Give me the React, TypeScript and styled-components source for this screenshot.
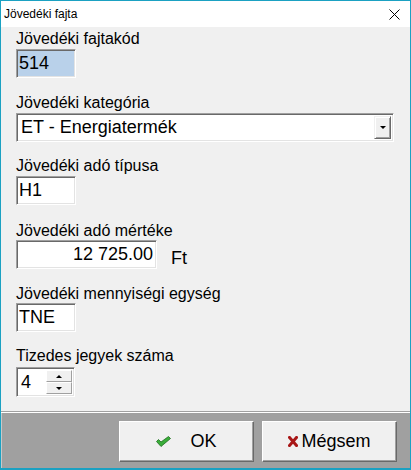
import styled, { createGlobalStyle } from "styled-components";

const GlobalStyle = createGlobalStyle`
  html, body {
    margin: 0;
    padding: 0;
    background: #ffffff;
  }
  body {
    font-family: "Liberation Sans", Arial, sans-serif;
    color: #000;
  }
`;

const Window = styled.div`
  width: 411px;
  height: 470px;
  box-sizing: border-box;
  border: 1px solid #1ba1c2;
  border-bottom-width: 2px;
  display: flex;
  flex-direction: column;
  background: #f0f0f0;
`;

const TitleBar = styled.div`
  height: 26px;
  flex-shrink: 0;
  background: #ffffff;
  display: flex;
  align-items: center;
  justify-content: space-between;
  padding: 0 10px 0 3px;
  font-size: 12px;
`;

const Body = styled.div`
  flex: 1;
  display: flex;
  flex-direction: column;
  padding: 0 16px 0 15px;
`;

const Field = styled.div<{ $top: number }>`
  display: flex;
  flex-direction: column;
  align-items: flex-start;
  margin-top: ${({ $top }) => $top}px;
`;

const Label = styled.label<{ $gap: number }>`
  font-size: 16px;
  line-height: 18px;
  margin-bottom: ${({ $gap }) => $gap}px;
  white-space: nowrap;
`;

const sunken = `
  box-sizing: border-box;
  border: 1px solid;
  border-color: #a0a0a0 #ffffff #ffffff #a0a0a0;
  box-shadow: inset 1px 1px 0 #696969, inset -1px -1px 0 #e3e3e3;
`;

const TextBox = styled.input<{ $width: number; $align?: "left" | "right"; $bg?: string }>`
  ${sunken}
  width: ${({ $width }) => $width}px;
  height: 29px;
  margin: 0;
  padding: 0 ${({ $align }) => ($align === "right" ? "3px" : "0")} 0
    ${({ $align }) => ($align === "right" ? "0" : "2px")};
  font-family: "Liberation Sans", Arial, sans-serif;
  font-size: 18px;
  color: #000;
  text-align: ${({ $align }) => $align ?? "left"};
  background: ${({ $bg }) => $bg ?? "#ffffff"};
  outline: none;
`;

const Combo = styled.div`
  ${sunken}
  width: 100%;
  height: 29px;
  background: #ffffff;
  display: flex;
  align-items: stretch;
  padding: 2px;
`;

const ComboText = styled.div`
  flex: 1;
  display: flex;
  align-items: center;
  padding-left: 2px;
  font-size: 18px;
`;

const DropButton = styled.div`
  width: 17px;
  box-sizing: border-box;
  background: #f0f0f0;
  border: 1px solid;
  border-color: #f0f0f0 #696969 #696969 #f0f0f0;
  box-shadow: inset 1px 1px 0 #ffffff, inset -1px -1px 0 #a0a0a0;
  display: flex;
  align-items: center;
  justify-content: center;
`;

const Arrow = styled.span<{ $up?: boolean }>`
  width: 0;
  height: 0;
  border-left: 3px solid transparent;
  border-right: 3px solid transparent;
  ${({ $up }) =>
    $up ? "border-bottom: 3px solid #000;" : "border-top: 3px solid #000;"}
`;

const InlineRow = styled.div`
  display: flex;
  align-items: flex-end;
`;

const Unit = styled.span`
  font-size: 18px;
  line-height: 18px;
  margin-left: 14px;
  margin-bottom: 2px;
`;

const Spinner = styled.div`
  ${sunken}
  width: 59px;
  height: 30px;
  background: #ffffff;
  display: flex;
  padding: 2px;
`;

const SpinText = styled.div`
  flex: 1;
  display: flex;
  align-items: center;
  padding-left: 2px;
  font-size: 18px;
`;

const SpinButtons = styled.div`
  width: 26px;
  display: flex;
  flex-direction: column;
`;

const SpinButton = styled.div`
  flex: 1;
  box-sizing: border-box;
  background: #f0f0f0;
  border: 1px solid;
  border-color: #ffffff #a0a0a0 #a0a0a0 #ffffff;
  display: flex;
  align-items: center;
  justify-content: center;
`;

const Separator = styled.div`
  height: 0;
  border-top: 1px solid #a0a0a0;
  border-bottom: 1px solid #ffffff;
`;

const Footer = styled.div`
  height: 55px;
  flex-shrink: 0;
  box-sizing: border-box;
  background: #a0a0a0;
  border-left: 1px solid #c8c8c8;
  display: flex;
  justify-content: flex-end;
  align-items: flex-start;
  gap: 8px;
  padding: 8px 13px 0 0;
`;

const Button = styled.button<{ $gap: number }>`
  width: 135px;
  height: 41px;
  box-sizing: border-box;
  background: #f0f0f0;
  border: 1px solid;
  border-color: #ffffff #696969 #696969 #ffffff;
  box-shadow: inset -1px -1px 0 #a0a0a0;
  display: flex;
  align-items: center;
  justify-content: center;
  gap: ${({ $gap }) => $gap}px;
  font-family: "Liberation Sans", Arial, sans-serif;
  font-size: 18px;
  color: #000;
  padding: 0;
`;

const CloseIcon = () => (
  <svg width="11" height="11" viewBox="0 0 11 11">
    <path d="M0.5 0.5 L10.5 10.5 M10.5 0.5 L0.5 10.5" stroke="#000" strokeWidth="1" />
  </svg>
);

const CheckIcon = () => (
  <svg width="15" height="11" viewBox="0 0 15 11">
    <polygon
      points="0.5,5.5 2.5,3.5 5,6 12.5,0.5 14.5,2.5 5,10.5"
      fill="#3aae3a"
      stroke="#1d6d1d"
      strokeWidth="0.8"
      strokeLinejoin="round"
    />
  </svg>
);

const CrossIcon = () => (
  <svg width="10" height="11" viewBox="0 0 10 11">
    <path d="M1.5 1.5 L8.5 9.5 M8.5 1.5 L1.5 9.5" stroke="#a81616" strokeWidth="3" strokeLinecap="square" />
  </svg>
);

export default function App() {
  return (
    <>
      <GlobalStyle />
      <Window>
        <TitleBar>
          <span>Jövedéki fajta</span>
          <CloseIcon />
        </TitleBar>
        <Body>
          <Field $top={3}>
            <Label $gap={1}>Jövedéki fajtakód</Label>
            <TextBox $width={60} $bg="#b9d1ea" value="514" readOnly />
          </Field>

          <Field $top={16}>
            <Label $gap={1}>Jövedéki kategória</Label>
            <Combo>
              <ComboText>ET - Energiatermék</ComboText>
              <DropButton>
                <Arrow />
              </DropButton>
            </Combo>
          </Field>

          <Field $top={15}>
            <Label $gap={1}>Jövedéki adó típusa</Label>
            <TextBox $width={60} value="H1" readOnly />
          </Field>

          <Field $top={17}>
            <Label $gap={0}>Jövedéki adó mértéke</Label>
            <InlineRow>
              <TextBox $width={141} $align="right" value="12 725.00" readOnly />
              <Unit>Ft</Unit>
            </InlineRow>
          </Field>

          <Field $top={16}>
            <Label $gap={0}>Jövedéki mennyiségi egység</Label>
            <TextBox $width={60} value="TNE" readOnly />
          </Field>

          <Field $top={15}>
            <Label $gap={2}>Tizedes jegyek száma</Label>
            <Spinner>
              <SpinText>4</SpinText>
              <SpinButtons>
                <SpinButton>
                  <Arrow $up />
                </SpinButton>
                <SpinButton>
                  <Arrow />
                </SpinButton>
              </SpinButtons>
            </Spinner>
          </Field>
        </Body>
        <Separator />
        <Footer>
          <Button $gap={19}>
            <CheckIcon />
            OK
          </Button>
          <Button $gap={3}>
            <CrossIcon />
            Mégsem
          </Button>
        </Footer>
      </Window>
    </>
  );
}
